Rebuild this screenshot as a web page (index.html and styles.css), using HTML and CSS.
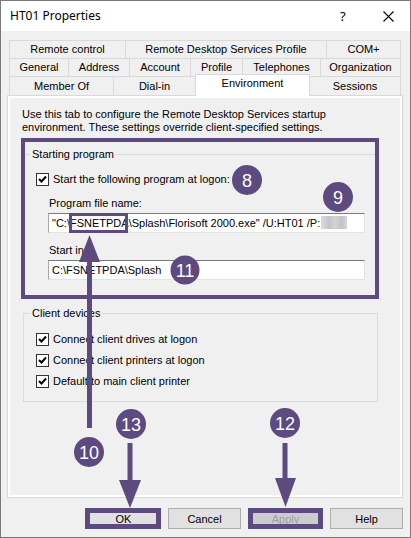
FILE: index.html
```html
<!DOCTYPE html>
<html>
<head>
<meta charset="utf-8">
<title>HT01 Properties</title>
<link rel="stylesheet" href="styles.css">
</head>
<body>
<div class="window">
  <div class="titlebar">
    <span class="title">HT01 Properties</span>
    <span class="help">?</span>
    <svg class="close" width="11" height="11" viewBox="0 0 11 11"><path d="M0.5 0.5 L10.5 10.5 M10.5 0.5 L0.5 10.5" stroke="#000" stroke-width="1.1" fill="none"/></svg>
  </div>
  <div class="body">
    <div class="tabs">
      <div class="tabrow">
        <div class="tab w116">Remote control</div>
        <div class="tab w201">Remote Desktop Services Profile</div>
        <div class="tab w75 last">COM+</div>
      </div>
      <div class="tabrow">
        <div class="tab w59">General</div>
        <div class="tab w61">Address</div>
        <div class="tab w61">Account</div>
        <div class="tab w52">Profile</div>
        <div class="tab w78">Telephones</div>
        <div class="tab w81 last">Organization</div>
      </div>
      <div class="tabrow row3">
        <div class="tab w104">Member Of</div>
        <div class="tab w82">Dial-in</div>
        <div class="tab w115 active">Environment</div>
        <div class="tab w91 last noleft">Sessions</div>
      </div>
    </div>
    <div class="panel">
      <div class="page">
        <p class="desc">Use this tab to configure the Remote Desktop Services startup<br>environment. These settings override client-specified settings.</p>
        <div class="group group1">
          <div class="legend">Starting program</div>
          <div class="check first">
            <span class="box"><svg width="11" height="11" viewBox="0 0 11 11"><path d="M2 5 L4.5 7.5 L9 2.5" stroke="#000" stroke-width="2" fill="none"/></svg></span>
            <span>Start the following program at logon:</span>
          </div>
          <div class="field-label">Program file name:</div>
          <div class="textbox">"C:\FSNETPDA\Splash\Florisoft 2000.exe" /U:HT01 /P:<span class="blur"></span></div>
          <div class="field-label">Start in:</div>
          <div class="textbox">C:\FSNETPDA\Splash</div>
        </div>
        <div class="group group2">
          <div class="legend">Client devices</div>
          <div class="check first">
            <span class="box"><svg width="11" height="11" viewBox="0 0 11 11"><path d="M2 5 L4.5 7.5 L9 2.5" stroke="#000" stroke-width="2" fill="none"/></svg></span>
            <span>Connect client drives at logon</span>
          </div>
          <div class="check">
            <span class="box"><svg width="11" height="11" viewBox="0 0 11 11"><path d="M2 5 L4.5 7.5 L9 2.5" stroke="#000" stroke-width="2" fill="none"/></svg></span>
            <span>Connect client printers at logon</span>
          </div>
          <div class="check">
            <span class="box"><svg width="11" height="11" viewBox="0 0 11 11"><path d="M2 5 L4.5 7.5 L9 2.5" stroke="#000" stroke-width="2" fill="none"/></svg></span>
            <span>Default to main client printer</span>
          </div>
        </div>
      </div>
    </div>
    <div class="buttons">
      <button class="btn">OK</button>
      <button class="btn">Cancel</button>
      <button class="btn disabled">Apply</button>
      <button class="btn">Help</button>
    </div>
  </div>
  <svg class="annot" width="411" height="538" viewBox="0 0 411 538">
    <g fill="none" stroke="#5d4a7e">
      <rect x="23" y="140" width="354" height="157" stroke-width="4"/>
      <rect x="70.5" y="214.5" width="56" height="17" stroke-width="3"/>
      <rect x="87.5" y="510.5" width="71" height="16" stroke-width="5"/>
      <rect x="250.5" y="510.5" width="70" height="16" stroke-width="5"/>
      <line x1="89.5" y1="258" x2="89.5" y2="428" stroke-width="5"/>
      <line x1="130" y1="443" x2="130" y2="484" stroke-width="5"/>
      <line x1="285" y1="443" x2="285" y2="482" stroke-width="5"/>
    </g>
    <g fill="#5d4a7e">
      <polygon points="79,262 100,262 89.5,235"/>
      <polygon points="119,480 141,480 130,508"/>
      <polygon points="275,478 296,478 285.5,507"/>
      <circle cx="247" cy="180" r="15"/>
      <circle cx="338" cy="197" r="15"/>
      <circle cx="185" cy="270" r="14.5"/>
      <circle cx="89" cy="452" r="15"/>
      <circle cx="131" cy="424" r="15"/>
      <circle cx="285" cy="423" r="15"/>
    </g>
    <g class="num" fill="#fff" text-anchor="middle">
      <text x="247" y="186.5">8</text>
      <text x="338" y="203.5">9</text>
      <text x="185" y="276.5">11</text>
      <text x="89" y="458.5">10</text>
      <text x="131" y="430.5">13</text>
      <text x="285" y="429.5">12</text>
    </g>
  </svg>
</div>
</body>
</html>
```

FILE: styles.css
```css
html, body {
  margin: 0;
  padding: 0;
}
body {
  width: 411px;
  height: 538px;
  overflow: hidden;
  font-family: "Liberation Sans", Arial, sans-serif;
  font-size: 11px;
  color: #000;
  background: #fff;
}
.window {
  position: relative;
  box-sizing: border-box;
  width: 411px;
  height: 538px;
  border: 1px solid #7a7a7a;
  background: #f0f0f0;
}
.titlebar {
  height: 30px;
  background: #fff;
  display: flex;
  align-items: center;
}
.title {
  flex: 1;
  margin-left: 9px;
  font-family: "Noto Sans", "Liberation Sans", sans-serif;
  font-size: 12px;
  line-height: 16px;
}
.help {
  font-family: "Noto Sans", "Liberation Sans", sans-serif;
  font-size: 13px;
  width: 7px;
  margin-right: 36px;
}
.close {
  display: block;
  margin-right: 16px;
}
.body {
  padding: 9px 7px 0 6px;
}
.tabs {
  margin-left: 2px;
  position: relative;
  z-index: 1;
}
.tabrow {
  display: flex;
  height: 18px;
}
.tabrow.row3 {
  height: 19px;
}
.tab {
  box-sizing: border-box;
  height: 100%;
  border-top: 1px solid #d9d9d9;
  border-left: 1px solid #d9d9d9;
  background: #f0f0f0;
  text-align: center;
  line-height: 17px;
  white-space: nowrap;
}
.row3 .tab {
  line-height: 18px;
}
.tab.last {
  border-right: 1px solid #d9d9d9;
}
.tab.noleft {
  border-left: none;
}
.tab.active {
  height: 22px;
  margin-top: -2px;
  background: #fff;
  border-right: 1px solid #d9d9d9;
  line-height: 17px;
}
.w52 { width: 52px; }
.w59 { width: 59px; }
.w61 { width: 61px; }
.w75 { width: 75px; }
.w78 { width: 78px; }
.w81 { width: 81px; }
.w82 { width: 82px; }
.w91 { width: 91px; }
.w104 { width: 104px; }
.w115 { width: 115px; }
.w116 { width: 116px; }
.w201 { width: 201px; }
.panel {
  box-sizing: border-box;
  width: 396px;
  height: 403px;
  border: 1px solid #d9d9d9;
  background: #fff;
  padding: 2px;
}
.page {
  box-sizing: border-box;
  height: 100%;
  background: #f0f0f0;
  padding: 10px 12px 0 12px;
}
.desc {
  margin: 0;
  line-height: 13px;
}
.group {
  border: 1px solid #dcdcdc;
  margin-left: 1px;
  width: 355px;
  box-sizing: border-box;
  padding: 0 12px;
}
.group1 {
  margin-top: 20px;
  height: 142px;
}
.group2 {
  margin-top: 17px;
  height: 89px;
}
.legend {
  width: max-content;
  margin: -8px 0 0 -6px;
  padding: 0 2px;
  line-height: 14px;
  background: #f0f0f0;
}
.check {
  display: flex;
  align-items: center;
  height: 13px;
  line-height: 13px;
  margin-top: 8px;
}
.check.first {
  margin-top: 12px;
}
.group2 .check.first {
  margin-top: 13px;
}
.box {
  box-sizing: border-box;
  width: 13px;
  height: 13px;
  border: 1px solid #333;
  background: #fff;
  margin-right: 4px;
  display: flex;
  align-items: center;
  justify-content: center;
}
.box svg {
  display: block;
}
.field-label {
  margin: 11px 0 0 13px;
  line-height: 13px;
}
.textbox {
  box-sizing: border-box;
  margin: 3px 0 0 12px;
  width: 317px;
  height: 20px;
  background: #fff;
  border-top: 1px solid #7a7a7a;
  border-left: 1px solid #a8a8a8;
  border-right: 1px solid #e3e3e3;
  border-bottom: 1px solid #e3e3e3;
  padding: 0 3px;
  line-height: 18px;
  white-space: nowrap;
  overflow: hidden;
}
.blur {
  display: inline-block;
  width: 26px;
  height: 13px;
  vertical-align: -2px;
  margin-left: 1px;
  background: linear-gradient(90deg, #dcdce0, #c4c4cb 30%, #d3d3d8 55%, #c2c2c9 80%, #d8d8dc);
}
.buttons {
  display: flex;
  justify-content: flex-end;
  gap: 8px;
  margin-top: 10px;
}
.btn {
  box-sizing: border-box;
  width: 73px;
  height: 21px;
  margin: 0;
  padding: 0;
  border: 1px solid #adadad;
  background: #e1e1e1;
  font-family: "Liberation Sans", Arial, sans-serif;
  font-size: 11px;
  color: #000;
}
.btn.disabled {
  background: #cccccc;
  border-color: #bfbfbf;
  color: #a0a0a0;
}
.annot {
  position: absolute;
  left: -1px;
  top: -1px;
  pointer-events: none;
}
.num text {
  font-family: "Liberation Sans", Arial, sans-serif;
  font-size: 18px;
}
```
